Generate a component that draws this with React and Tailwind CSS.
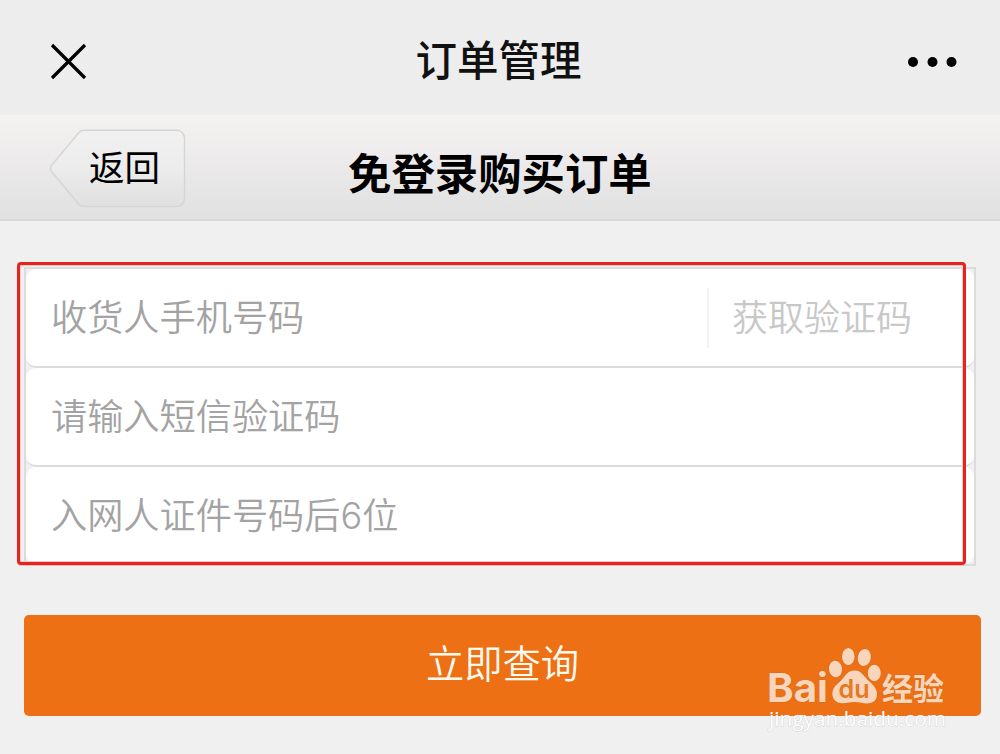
import { useState } from 'react'

function BackButton() {
  return (
    <button type="button" className="relative ml-[49px] mt-[14px] h-[79px] w-[137px]">
      <svg className="absolute inset-0" width="137" height="79" viewBox="0 0 137 79" fill="none">
        <defs>
          <linearGradient id="back-fill" x1="0" y1="0" x2="0" y2="1">
            <stop offset="0" stopColor="#f1f1f1" />
            <stop offset="0.5" stopColor="#ececec" />
            <stop offset="1" stopColor="#e0e0e0" />
          </linearGradient>
        </defs>
        <path
          d="M34 1.2H127.5A8 8 0 0 1 135.5 9.2V69.5A8 8 0 0 1 127.5 77.5H34Q31.500 77.500 29.500 75L2.500 42.500Q0.500 39.500 2.500 36.500L29.500 4Q31.500 1.200 34 1.200Z"
          fill="url(#back-fill)"
          stroke="#d5d5d5"
          strokeWidth="1.4"
        />
      </svg>
      <span className="relative left-[7px] text-[35.500px] leading-[79px] text-black">返回</span>
    </button>
  )
}

function Watermark() {
  return (
    <svg
      className="pointer-events-none absolute left-[760px] top-[640px]"
      width="200"
      height="100"
      viewBox="0 0 200 100"
    >
      <g fill="#f9d5bc" stroke="#c96a22" strokeOpacity="0.45" strokeWidth="1.2" paintOrder="stroke">
        <text x="7" y="62" fontFamily="Inter, sans-serif" fontWeight="700" fontSize="39.500" textLength="61" lengthAdjust="spacingAndGlyphs">
          Bai
        </text>
        <ellipse cx="75.500" cy="29" rx="6.500" ry="8.300" transform="rotate(-8 75.500 29)" />
        <ellipse cx="88.300" cy="16.500" rx="6.300" ry="8.600" />
        <ellipse cx="104.300" cy="17.500" rx="6.500" ry="8.600" transform="rotate(10 104.300 17.500)" />
        <ellipse cx="114.300" cy="33" rx="6.500" ry="8.300" />
        <path d="M94.500 30.500C102 30.500 104 37 110 42C117 48 118.500 54 116 59C112.500 64.500 106 64 100 62.500Q94.500 61.500 89 62.500C83 64 76.500 64 73.500 58.500C71 53 72.500 47.500 79 42.500C85 37 87 30.500 94.500 30.500Z" />
        <text x="122" y="60" fontFamily="Noto Sans CJK SC, sans-serif" fontWeight="700" fontSize="31" textLength="62" lengthAdjust="spacingAndGlyphs">
          经验
        </text>
      </g>
      <text x="78.500" y="58" fill="#e67924" fontFamily="Inter, sans-serif" fontWeight="600" fontSize="25" textLength="31" lengthAdjust="spacingAndGlyphs">
        du
      </text>
      <text
        x="9"
        y="86"
        fill="#fff"
        stroke="#999"
        strokeOpacity="0.35"
        strokeWidth="1"
        paintOrder="stroke"
        fontFamily="Open Sans, sans-serif"
        fontWeight="500"
        fontSize="20"
        textLength="177"
        lengthAdjust="spacingAndGlyphs"
      >
        jingyan.baidu.com
      </text>
    </svg>
  )
}

function Field({ placeholder, value, onChange, last, children }) {
  return (
    <div
      className={`flex items-center rounded-[10px] bg-white pl-[25px] ${
        last ? 'h-[97px]' : 'h-[99px] border-b-2 border-[#dcdcdc]'
      }`}
    >
      <input
        value={value}
        onChange={onChange}
        placeholder={placeholder}
        className="h-[60px] min-w-0 flex-1 bg-transparent text-[36.200px] font-[350] text-[#333] outline-none placeholder:text-[#a3a3a3]"
      />
      {children}
    </div>
  )
}

export default function App() {
  const [phone, setPhone] = useState('')
  const [code, setCode] = useState('')
  const [idTail, setIdTail] = useState('')

  return (
    <div className="relative h-[754px] w-[1000px] overflow-hidden bg-[#f0f0f0] font-['Inter','Noto_Sans_CJK_SC',sans-serif]">
      <header className="flex h-[115px] items-center justify-between bg-[#ededed] pb-[9px] pl-[50px] pr-[43px]">
        <svg width="37" height="37" viewBox="0 0 37 37" stroke="#000" strokeWidth="3.2" fill="none" className="mt-[17px]">
          <path d="M2 2L35 35M35 2L2 35" />
        </svg>
        <h1 className="ml-[2px] mt-[18px] text-[41.500px] font-medium leading-none text-[#111]">订单管理</h1>
        <svg width="49" height="10" viewBox="0 0 49 10" className="mt-[17px]">
          <circle cx="5" cy="5" r="5" />
          <circle cx="24.500" cy="5" r="5" />
          <circle cx="43.500" cy="5" r="5" />
        </svg>
      </header>

      <div className="flex h-[106px] border-b-2 border-[#d8d8d8] bg-linear-to-b from-[#f4f3f1] via-[#ebe9ea] to-[#e1e1e1]">
        <BackButton />
        <h2 className="ml-[162px] mt-[15px] text-[43.400px] font-bold leading-[88px] text-black">免登录购买订单</h2>
      </div>

      <main className="px-[24px] pt-[46px]">
        <div className="relative w-[952px] border-2 border-[#dcdcdc] bg-[#f0f0f0]">
          <Field placeholder="收货人手机号码" value={phone} onChange={(e) => setPhone(e.target.value)}>
            <button
              type="button"
              className="mr-[62px] h-[60px] border-l-2 border-[#f4f4f4] pl-[23px] text-[36px] font-[350] text-[#c8c8c8]"
            >
              获取验证码
            </button>
          </Field>
          <Field placeholder="请输入短信验证码" value={code} onChange={(e) => setCode(e.target.value)} />
          <Field last placeholder="入网人证件号码后6位" value={idTail} onChange={(e) => setIdTail(e.target.value)} />
          <div className="pointer-events-none absolute -left-[9px] -top-[7px] h-[303px] w-[949px] rounded-[4px] border-3 border-[#e5241f] shadow-[0_1px_0_#f3b9b6,inset_0_0_0_1px_#f6c9c6]" />
        </div>

        <button
          type="button"
          className="mt-[49px] block h-[101px] w-[957px] rounded-[5px] bg-[#ed7014] pb-[2px] text-[38.300px] font-[350] leading-[97px] text-[#fffaf0]"
        >
          立即查询
        </button>
      </main>

      <Watermark />
    </div>
  )
}
